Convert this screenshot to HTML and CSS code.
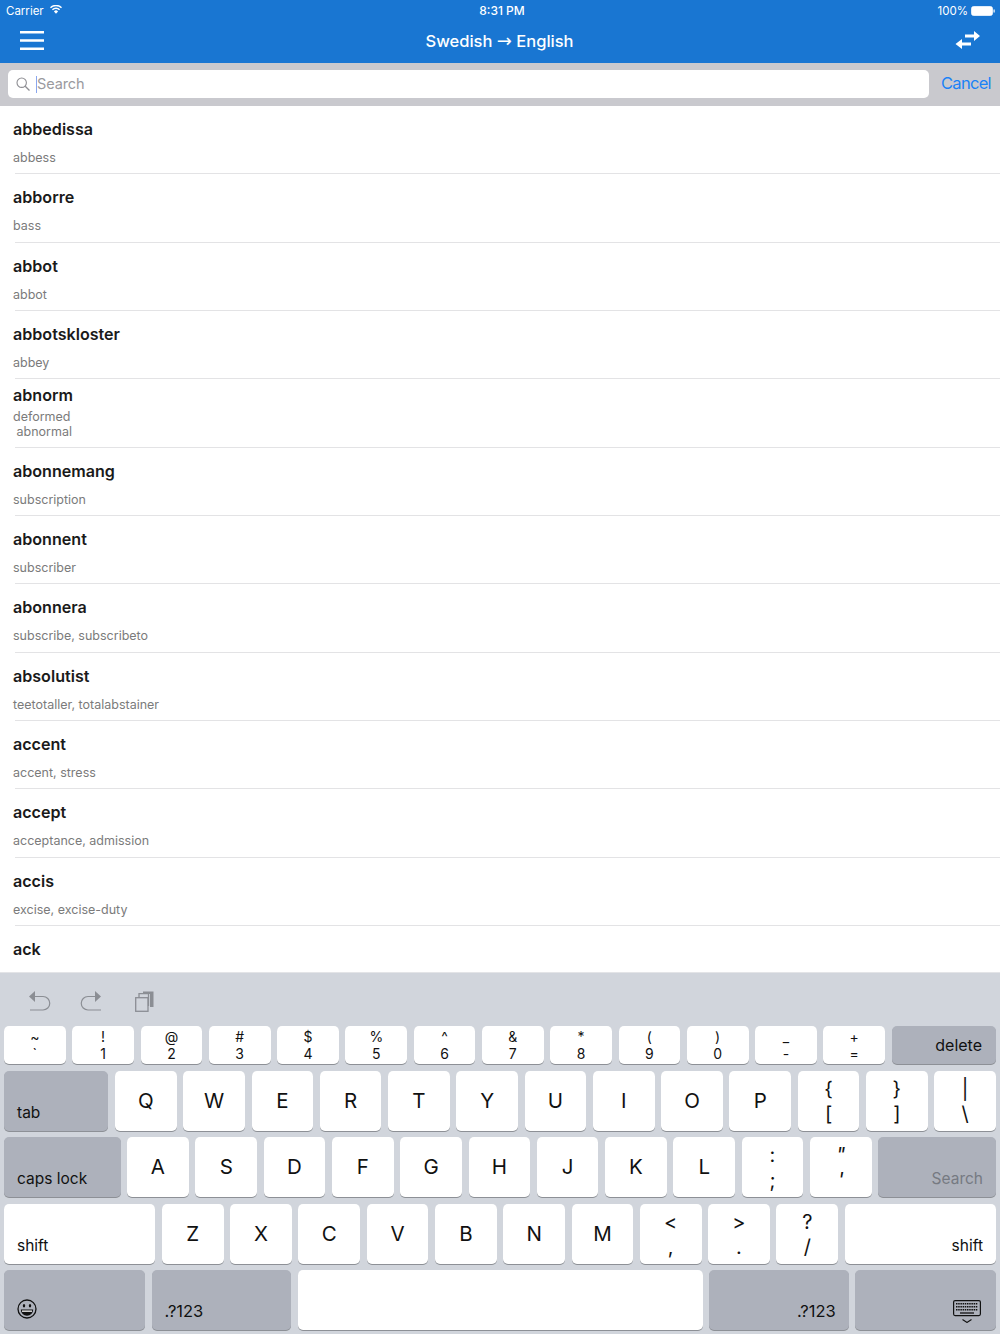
FILE: index.html
```html
<!DOCTYPE html>
<html lang="en">
<head>
    <meta charset="UTF-8">
    <meta name="viewport" content="width=device-width, initial-scale=1.0">
    <title>Swedish English Dictionary</title>
    <link rel="stylesheet" href="styles.css">
</head>
<body>
    <div class="app">
        <!-- Status bar and navigation -->
        <header class="top">
            <div class="status">
                <div class="status-left">
                    <span>Carrier</span>
                    <svg class="wifi" width="12" height="9" viewBox="0 0 14 10"><path d="M7 10 4.600 7.200a3.400 3.400 0 0 1 4.800 0zM3.400 6 2.200 4.700a6.900 6.900 0 0 1 9.600 0L10.600 6a5.200 5.200 0 0 0-7.200 0zM1.100 3.500 0 2.300a10 10 0 0 1 14 0l-1.100 1.200a8.400 8.400 0 0 0-11.800 0z" fill="#fff"/></svg>
                </div>
                <div class="status-time">8:31 PM</div>
                <div class="status-right">
                    <span>100%</span>
                    <svg width="24" height="10" viewBox="0 0 24 10"><rect x=".5" y=".5" width="21" height="9" rx="2" fill="#fff" stroke="#fff" stroke-opacity=".7"/><rect x="22.500" y="3.500" width="1.200" height="3" fill="#fff"/></svg>
                </div>
            </div>
            <nav class="nav">
                <svg class="menu-icon" width="24" height="20" viewBox="0 0 24 20"><path d="M0 1.300h24M0 9.500h24M0 17.800h24" stroke="#fff" stroke-width="2.600"/></svg>
                <div class="nav-title">Swedish <span class="nav-arrow">→</span> English</div>
                <svg class="swap-icon" width="26" height="20" viewBox="0 0 26 20"><path d="M10 4.500h10v3H10zM19 1l6 5-6 5zM7 9v10L.5 14zM7 12.500h9v3H7z" fill="#fff"/></svg>
            </nav>
        </header>

        <div class="searchbar">
            <div class="search-field">
                <svg width="14" height="14" viewBox="0 0 14 14"><circle cx="5.700" cy="5.700" r="4.700" fill="none" stroke="#8e8e93" stroke-width="1.100"/><path d="m9.200 9.200 4.300 4.300" stroke="#8e8e93" stroke-width="1.300"/></svg>
                <span class="caret"></span>
                <span class="placeholder">Search</span>
            </div>
            <div class="cancel">Cancel</div>
        </div>

        <!-- Word list -->
        <main class="list">
            <div class="row"><div class="word">abbedissa</div><div class="gloss">abbess</div></div>
            <div class="row"><div class="word">abborre</div><div class="gloss">bass</div></div>
            <div class="row"><div class="word">abbot</div><div class="gloss">abbot</div></div>
            <div class="row"><div class="word">abbotskloster</div><div class="gloss">abbey</div></div>
            <div class="row row-tall"><div class="word">abnorm</div><div class="gloss">deformed<br>&nbsp;abnormal</div></div>
            <div class="row"><div class="word">abonnemang</div><div class="gloss">subscription</div></div>
            <div class="row"><div class="word">abonnent</div><div class="gloss">subscriber</div></div>
            <div class="row"><div class="word">abonnera</div><div class="gloss">subscribe, subscribeto</div></div>
            <div class="row"><div class="word">absolutist</div><div class="gloss">teetotaller, totalabstainer</div></div>
            <div class="row"><div class="word">accent</div><div class="gloss">accent, stress</div></div>
            <div class="row"><div class="word">accept</div><div class="gloss">acceptance, admission</div></div>
            <div class="row"><div class="word">accis</div><div class="gloss">excise, excise-duty</div></div>
            <div class="row"><div class="word">ack</div></div>
        </main>

        <!-- Keyboard -->
        <section class="keyboard">
            <div class="tools">
                <svg width="24" height="22" viewBox="0 0 24 22"><path d="M1 6.500 7 1v11z" fill="#8b8e94"/><path d="M7 6.500h8a6.750 6.750 0 0 1 0 13.500H2" fill="none" stroke="#8b8e94" stroke-width="1.200"/></svg>
                <svg width="22" height="22" viewBox="0 0 22 22"><path d="M21 6.500 15 1v11z" fill="#8b8e94"/><path d="M15 6.500H8A6.750 6.750 0 0 0 8 20h13" fill="none" stroke="#8b8e94" stroke-width="1.200"/></svg>
                <svg class="tool-copy" width="19" height="22" viewBox="0 0 19 22"><rect x=".7" y="7.700" width="12.300" height="13.600" fill="none" stroke="#8b8e94" stroke-width="1.300"/><path d="M4 7.500V3.700h9.500V16" fill="none" stroke="#8b8e94" stroke-width="1.300"/><path d="M8 4V1.500h10.500V17H15V4z" fill="#8b8e94"/></svg>
            </div>
            <div class="keys">
                <div class="key-row key-row-top">
                    <div class="key key-two"><span>~</span><span>`</span></div>
                    <div class="key key-two"><span>!</span><span>1</span></div>
                    <div class="key key-two"><span>@</span><span>2</span></div>
                    <div class="key key-two"><span>#</span><span>3</span></div>
                    <div class="key key-two"><span>$</span><span>4</span></div>
                    <div class="key key-two"><span>%</span><span>5</span></div>
                    <div class="key key-two"><span>^</span><span>6</span></div>
                    <div class="key key-two"><span>&amp;</span><span>7</span></div>
                    <div class="key key-two"><span>*</span><span>8</span></div>
                    <div class="key key-two"><span>(</span><span>9</span></div>
                    <div class="key key-two"><span>)</span><span>0</span></div>
                    <div class="key key-two"><span>_</span><span>-</span></div>
                    <div class="key key-two"><span>+</span><span>=</span></div>
                    <div class="key key-grey key-wide key-delete">delete</div>
                </div>
                <div class="key-row">
                    <div class="key key-grey key-wide key-low">tab</div>
                    <div class="key">Q</div><div class="key">W</div><div class="key">E</div><div class="key">R</div><div class="key">T</div>
                    <div class="key">Y</div><div class="key">U</div><div class="key">I</div><div class="key">O</div><div class="key">P</div>
                    <div class="key key-sym"><span>{</span><span>[</span></div>
                    <div class="key key-sym"><span>}</span><span>]</span></div>
                    <div class="key key-sym"><span>|</span><span>\</span></div>
                </div>
                <div class="key-row">
                    <div class="key key-grey key-caps key-low">caps lock</div>
                    <div class="key">A</div><div class="key">S</div><div class="key">D</div><div class="key">F</div><div class="key">G</div>
                    <div class="key">H</div><div class="key">J</div><div class="key">K</div><div class="key">L</div>
                    <div class="key key-sym"><span>:</span><span>;</span></div>
                    <div class="key key-sym"><span class="slant">"</span><span class="slant">'</span></div>
                    <div class="key key-grey key-wide key-low key-right key-dim">Search</div>
                </div>
                <div class="key-row">
                    <div class="key key-wide key-low">shift</div>
                    <div class="key">Z</div><div class="key">X</div><div class="key">C</div><div class="key">V</div>
                    <div class="key">B</div><div class="key">N</div><div class="key">M</div>
                    <div class="key key-sym"><span>&lt;</span><span>,</span></div>
                    <div class="key key-sym"><span>&gt;</span><span>.</span></div>
                    <div class="key key-sym"><span>?</span><span>/</span></div>
                    <div class="key key-wide key-low key-right">shift</div>
                </div>
                <div class="key-row">
                    <div class="key key-grey key-emoji key-low">
                        <svg width="20" height="20" viewBox="0 0 20 20"><circle cx="10" cy="10" r="9" fill="none" stroke="#111" stroke-width="1.300"/><ellipse cx="7" cy="6.800" rx="1.200" ry="1.700" fill="#111"/><ellipse cx="13" cy="6.800" rx="1.200" ry="1.700" fill="#111"/><path d="M3.800 10.500h12.400a6.200 6.200 0 0 1-12.400 0z" fill="#111"/><path d="M5 11.500h10v1.300H5z" fill="#fff"/></svg>
                    </div>
                    <div class="key key-grey key-num key-low">.?123</div>
                    <div class="key key-space"></div>
                    <div class="key key-grey key-num key-low key-right">.?123</div>
                    <div class="key key-grey key-hide key-low key-right">
                        <svg width="28" height="23" viewBox="0 0 28 23"><rect x=".6" y=".6" width="26.800" height="15" rx="1.500" fill="none" stroke="#111" stroke-width="1.200"/><path d="M3 3.800h22M3 6.800h22M3 9.800h22" stroke="#111" stroke-width="1.500" stroke-dasharray="1.500 .7"/><path d="M7 13h14" stroke="#111" stroke-width="1.300"/><path d="m9.500 19.500 4.500 3 4.500-3" fill="none" stroke="#111" stroke-width="1.100"/></svg>
                    </div>
                </div>
            </div>
        </section>
    </div>
</body>
</html>
```
FILE: styles.css
```css
html, body {
    margin: 0;
    padding: 0;
}
body {
    font-family: Inter, "Liberation Sans", sans-serif;
    background-color: #fff;
    color: #111;
}
.app {
    height: 1334px;
    display: flex;
    flex-direction: column;
    overflow: hidden;
}

/* Top bar */
.top {
    background-color: #1976d2;
    color: #fff;
    height: 63px;
    flex: none;
}
.status {
    height: 20px;
    padding: 0 5px 0 6px;
    display: grid;
    grid-template-columns: 1fr auto 1fr;
    align-items: center;
    font-size: 11.500px;
}
.status-left {
    display: flex;
    align-items: center;
    gap: 6px;
    padding-top: 1px;
}
.wifi {
    margin-top: -3px;
}
.status-time {
    font-size: 12px;
    font-weight: 500;
    padding-left: 3px;
}
.status-right {
    display: flex;
    justify-content: flex-end;
    align-items: center;
    gap: 3px;
    padding-top: 1px;
}
.nav {
    height: 43px;
    padding: 0 19px 0 20px;
    display: flex;
    justify-content: space-between;
    align-items: center;
}
.menu-icon {
    margin-top: -2px;
}
.swap-icon {
    margin-top: -3px;
}
.nav-title {
    font-size: 16.500px;
    font-weight: 500;
    margin-top: -2px;
}
.nav-arrow {
    font-family: "DejaVu Sans", sans-serif;
    font-size: 18px;
    font-weight: 400;
}

/* Search */
.searchbar {
    height: 43px;
    flex: none;
    background-color: #c9c9ce;
    padding: 7px 8px 8px;
    box-sizing: border-box;
    display: flex;
    align-items: stretch;
    gap: 12px;
}
.search-field {
    flex: 1;
    background: #fff;
    border-radius: 5px;
    display: flex;
    align-items: center;
    padding-left: 8px;
    font-size: 14.500px;
}
.caret {
    width: 1px;
    height: 17px;
    margin-left: 6px;
    background-color: #8aa6ee;
}
.placeholder {
    color: #9a9a9e;
    margin-top: -1px;
    letter-spacing: -.1px;
}
.cancel {
    width: 51px;
    color: #1a82f7;
    font-size: 16.500px;
    letter-spacing: -.7px;
    display: flex;
    align-items: center;
    margin-top: -3px;
}

/* List */
.list {
    flex: 1;
    overflow: hidden;
    min-height: 0;
}
.row {
    height: 68.330px;
    box-sizing: border-box;
    padding: 13px 13px 0;
    background: linear-gradient(#e3e3e5, #e3e3e5) no-repeat 15px 100% / 100% 1px;
}
.word {
    font-size: 16.100px;
    font-weight: 600;
    line-height: 20px;
    color: #1a1a1a;
}
.gloss {
    margin-top: 11px;
    font-size: 12.500px;
    line-height: 15px;
    color: #7b7b7b;
}
.row-tall {
    padding-top: 6px;
}
.row-tall .gloss {
    margin-top: 4px;
}

/* Keyboard */
.keyboard {
    height: 362px;
    flex: none;
    background-color: #d1d5dc;
    border-top: 1px solid #e3e4e7;
    box-sizing: border-box;
}
.tools {
    height: 53px;
    padding: 3px 0 0 28px;
    box-sizing: border-box;
    display: flex;
    align-items: center;
    gap: 28px;
}
.tool-copy {
    margin-left: 5px;
}
.keys {
    padding: 0 4px;
    display: flex;
    flex-direction: column;
    gap: 6.500px;
}
.key-row {
    display: flex;
    gap: 6.600px;
    height: 60px;
}
.key-row-top {
    height: 38px;
}
.key {
    width: 61.700px;
    flex: none;
    background: #fff;
    border-radius: 5px;
    box-shadow: 0 1px 0 #8d9096;
    box-sizing: border-box;
    display: flex;
    align-items: center;
    justify-content: center;
    font-size: 20.500px;
    padding-bottom: 1px;
}
.key-grey {
    background-color: #adb1bb;
}
.key-wide {
    flex: 1;
}
.key-caps {
    width: 116.500px;
}
.key-emoji {
    width: 141px;
}
.key-num {
    width: 139.500px;
}
.key-space {
    width: 405px;
}
.key-hide {
    flex: 1;
}
.key-low {
    font-size: 15.500px;
    justify-content: flex-start;
    align-items: flex-end;
    padding: 0 13px 9px;
}
.key-num {
    font-size: 16.500px;
}
.key-right {
    justify-content: flex-end;
}
.key-dim {
    color: #767a82;
}
.key-delete {
    font-size: 16px;
    justify-content: flex-end;
    padding: 0 14px 0 0;
}
.key-hide {
    padding: 0 15px 7px;
}
.key-emoji {
    padding-bottom: 11px;
}
.key-two, .key-sym {
    flex-direction: column;
    padding: 0;
}
.key-two {
    font-size: 14px;
    line-height: 17px;
}
.key-sym {
    font-size: 20px;
    line-height: 25px;
    padding-top: 2px;
}
.slant {
    display: block;
    font-style: italic;
}
```
